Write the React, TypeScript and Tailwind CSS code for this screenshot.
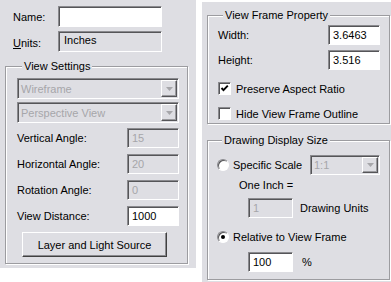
import React from 'react';

const bg = 'bg-[#dedee3]';
const font = "font-['Liberation_Sans',Arial,sans-serif] text-[11px] leading-[14px] text-black";

const sunken =
  'border border-t-[#8a8a8e] border-l-[#8a8a8e] border-b-white border-r-white shadow-[inset_1px_1px_0_#555558]';

const TextBox = ({ value, w, h = 20, disabled = false }: { value: string; w: number; h?: number; disabled?: boolean }) => (
  <div
    className={`${sunken} flex items-center pl-[4px] ${disabled ? 'bg-[#dedee3] text-[#a6a6aa]' : 'bg-white text-black'}`}
    style={{ width: w, height: h }}
  >
    {value}
  </div>
);

const ArrowDown = () => (
  <svg width="7" height="4" viewBox="0 0 7 4">
    <path d="M0 0h7L3.5 4z" fill="#a6a6aa" />
  </svg>
);

const Select = ({ value, w, h = 21 }: { value: string; w: number; h?: number }) => (
  <div className={`${sunken} ${bg} flex items-center justify-between text-[#a6a6aa]`} style={{ width: w, height: h }}>
    <span className="pl-[3px]">{value}</span>
    <div className="mr-[1px] h-full w-[16px] py-[1px]">
      <div className="flex h-full w-full items-center justify-center border border-t-white border-l-white border-b-[#555558] border-r-[#555558] shadow-[inset_-1px_-1px_0_#9a9a9e]">
        <ArrowDown />
      </div>
    </div>
  </div>
);

const Group = ({ title, className, children }: { title: string; className: string; children: React.ReactNode }) => (
  <fieldset
    className={`border border-[#9c9ca0] shadow-[inset_1px_1px_0_#fff,1px_1px_0_#fff] ${className}`}
  >
    <legend className={`${bg} ml-[5px] px-[2px] leading-[14px]`}>{title}</legend>
    {children}
  </fieldset>
);

const Checkbox = ({ checked }: { checked?: boolean }) => (
  <div className={`${sunken} flex h-[13px] w-[13px] items-center justify-center bg-white`}>
    {checked && (
      <svg width="9" height="9" viewBox="0 0 9 9">
        <path d="M1.5 4 L3.5 6.2 L7.8 1.6" stroke="#000" strokeWidth="1.9" fill="none" />
      </svg>
    )}
  </div>
);

const Radio = ({ checked }: { checked?: boolean }) => (
  <div className="flex h-[12px] w-[12px] items-center justify-center rounded-full border border-t-[#8a8a8e] border-l-[#8a8a8e] border-b-white border-r-white bg-white shadow-[inset_1px_1px_0_#555558]">
    {checked && <div className="h-[4px] w-[4px] rounded-full bg-black" />}
  </div>
);

const AngleRow = ({ label, value, editable }: { label: string; value: string; editable?: boolean }) => (
  <div className="mt-[6px] flex h-[20px] items-center first:mt-[5px]">
    <span className="w-[110px]">{label}</span>
    <TextBox value={value} w={52} disabled={!editable} />
  </div>
);

export default function App() {
  return (
    <div className={`flex h-[282px] w-[391px] bg-white ${font}`}>
      {/* left panel */}
      <div className={`${bg} h-[268px] w-[196px] pt-[6px]`}>
        <div className="flex h-[21px] items-center pl-[13px]">
          <span className="w-[45px]">Name:</span>
          <TextBox value="" w={104} h={21} />
        </div>
        <div className="mt-[4px] flex h-[21px] items-center pl-[13px]">
          <span className="w-[45px] pt-[3px]">
            <span className="underline">U</span>nits:
          </span>
          <div className={`${sunken} h-[21px] w-[104px] pl-[5px] pt-[1px]`}>Inches</div>
        </div>

        <Group title="View Settings" className="ml-[5px] mt-[7px] h-[205px] w-[183px] pl-[11px] pt-[5px]">
          <Select value="Wireframe" w={162} />
          <div className="mt-[3px]">
            <Select value="Perspective View" w={162} />
          </div>
          <div>
            <AngleRow label="Vertical Angle:" value="15" />
            <AngleRow label="Horizontal Angle:" value="20" />
            <AngleRow label="Rotation Angle:" value="0" />
            <AngleRow label="View Distance:" value="1000" editable />
          </div>
          <button className="ml-[5px] mt-[6px] flex h-[25px] w-[145px] items-center justify-center border border-t-white border-l-white border-b-[#404040] border-r-[#404040] shadow-[inset_-1px_-1px_0_#8a8a8e]">
            Layer and Light Source
          </button>
        </Group>
      </div>

      {/* right panel */}
      <div className={`${bg} ml-[6px] mt-[2px] h-[280px] w-[189px] pt-[6px]`}>
        <Group title="View Frame Property" className="ml-[5px] h-[116px] w-[183px] pl-[10px] pr-[9px] pt-[3px]">
          <div className="flex h-[20px] items-center">
            <span className="w-[110px]">Width:</span>
            <TextBox value="3.6463" w={52} />
          </div>
          <div className="mt-[5px] flex h-[20px] items-center">
            <span className="w-[110px]">Height:</span>
            <TextBox value="3.516" w={52} />
          </div>
          <div className="mt-[12px] flex h-[13px] items-center gap-[5px]">
            <Checkbox checked />
            <span>Preserve Aspect Ratio</span>
          </div>
          <div className="mt-[12px] flex h-[13px] items-center gap-[5px]">
            <Checkbox />
            <span>Hide View Frame Outline</span>
          </div>
        </Group>

        <Group title="Drawing Display Size" className="ml-[5px] mt-[9px] h-[147px] w-[183px] pl-[9px] pt-[8px]">
          <div className="flex h-[20px] items-center">
            <Radio />
            <span className="ml-[4px] w-[77px]">Specific Scale</span>
            <Select value="1:1" w={70} h={20} />
          </div>
          <div className="ml-[22px] mt-[3px] h-[14px]">One Inch =</div>
          <div className="ml-[31px] mt-[6px] flex h-[20px] items-center gap-[7px]">
            <TextBox value="1" w={45} disabled />
            <span>Drawing Units</span>
          </div>
          <div className="mt-[12px] flex h-[14px] items-center">
            <Radio checked />
            <span className="ml-[4px]">Relative to View Frame</span>
          </div>
          <div className="ml-[31px] mt-[8px] flex h-[20px] items-center gap-[9px]">
            <TextBox value="100" w={45} />
            <span>%</span>
          </div>
        </Group>
      </div>
    </div>
  );
}
